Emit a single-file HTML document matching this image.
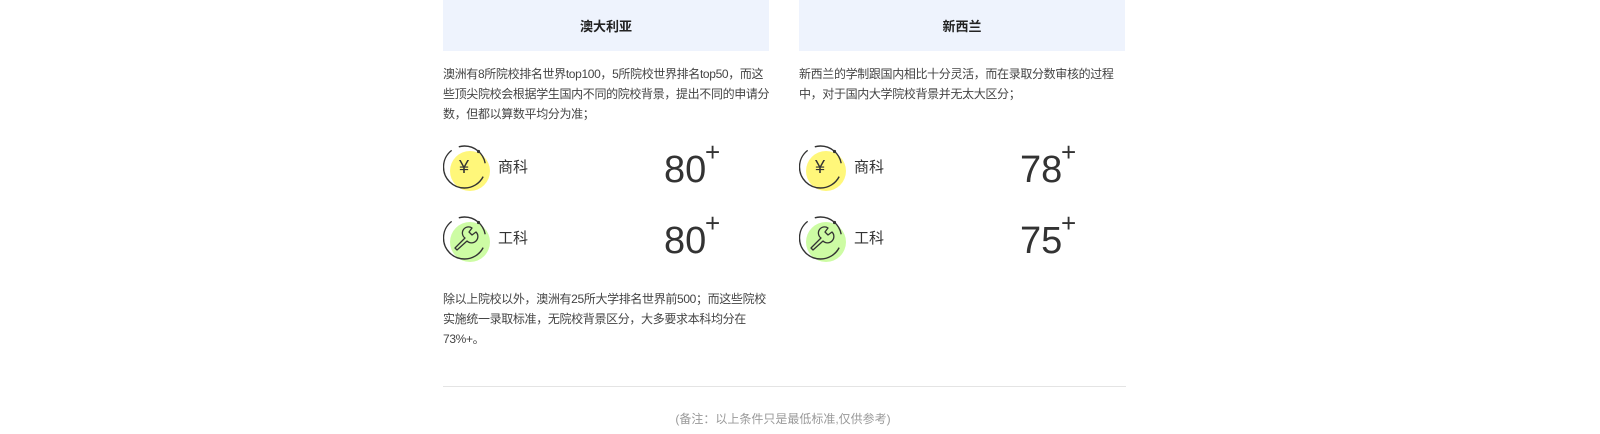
<!DOCTYPE html>
<html><head><meta charset="utf-8"><style>
*{margin:0;padding:0;box-sizing:border-box}
body{width:1600px;height:434px;background:#fff;font-family:"Liberation Sans","Noto Sans CJK SC",sans-serif;color:#333;position:relative;overflow:hidden}
.col{position:absolute;top:0;width:326px}
.hd{height:51px;background:#eef3fd;text-align:center;line-height:53px;font-size:13px;font-weight:bold;color:#222}
.p{font-size:12px;line-height:20px;color:#444;position:absolute;left:0;width:340px;white-space:nowrap;letter-spacing:-0.35px}
.row{position:absolute;left:0;width:326px;height:48px}
.row svg{position:absolute;left:0;top:0}
.row .lb{position:absolute;left:55px;top:11px;font-size:15px;color:#333}
.row .n{position:absolute;top:4px;font-size:38px;color:#333;font-family:"Liberation Sans",sans-serif}
.row .pl{position:absolute;top:-8px;font-size:26px;color:#333}
.hr{position:absolute;left:443px;top:386px;width:683px;height:1px;background:#e4e4e4}
.ft{position:absolute;left:0;width:1566px;top:410px;text-align:center;font-size:12px;color:#999}
</style></head><body>

<div class="col" style="left:443px">
 <div class="hd">澳大利亚</div>
 <div class="p" style="top:64px">澳洲有8所院校排名世界top100，5所院校世界排名top50，而这<br>些顶尖院校会根据学生国内不同的院校背景，提出不同的申请分<br>数，但都以算数平均分为准；</div>
 <div class="row" style="top:145px">
  <svg width="50" height="50"><circle cx="27" cy="26" r="20" fill="#fff77a"/><circle cx="21.5" cy="22" r="21" fill="none" stroke="#333" stroke-width="1.4" stroke-dasharray="75 8 35 14" stroke-dashoffset="-10"/><circle cx="35.5" cy="6.5" r="1.6" fill="#333"/><text x="21" y="28" font-size="18" text-anchor="middle" fill="#333" font-family="Liberation Sans">¥</text></svg>
  <span class="lb">商科</span><span class="n" style="left:221px">80</span><span class="pl" style="left:262px">+</span>
 </div>
 <div class="row" style="top:216px">
  <svg width="50" height="50"><circle cx="27" cy="26" r="20" fill="#cdfca4"/><circle cx="21.5" cy="22" r="21" fill="none" stroke="#333" stroke-width="1.4" stroke-dasharray="75 8 35 14" stroke-dashoffset="-10"/><circle cx="35.5" cy="6.5" r="1.6" fill="#333"/><path d="M12 32 L22 22 A6 6 0 0 1 29 12 L26 16 L29 19 L33 16 A6 6 0 0 1 24 25 L14 34 Z" fill="none" stroke="#333" stroke-width="1.3" stroke-linejoin="round"/></svg>
  <span class="lb">工科</span><span class="n" style="left:221px">80</span><span class="pl" style="left:262px">+</span>
 </div>
 <div class="p" style="top:289px">除以上院校以外，澳洲有25所大学排名世界前500；而这些院校<br>实施统一录取标准，无院校背景区分，大多要求本科均分在<br>73%+。</div>
</div>

<div class="col" style="left:799px">
 <div class="hd">新西兰</div>
 <div class="p" style="top:64px">新西兰的学制跟国内相比十分灵活，而在录取分数审核的过程<br>中，对于国内大学院校背景并无太大区分；</div>
 <div class="row" style="top:145px">
  <svg width="50" height="50"><circle cx="27" cy="26" r="20" fill="#fff77a"/><circle cx="21.5" cy="22" r="21" fill="none" stroke="#333" stroke-width="1.4" stroke-dasharray="75 8 35 14" stroke-dashoffset="-10"/><circle cx="35.5" cy="6.5" r="1.6" fill="#333"/><text x="21" y="28" font-size="18" text-anchor="middle" fill="#333" font-family="Liberation Sans">¥</text></svg>
  <span class="lb">商科</span><span class="n" style="left:221px">78</span><span class="pl" style="left:262px">+</span>
 </div>
 <div class="row" style="top:216px">
  <svg width="50" height="50"><circle cx="27" cy="26" r="20" fill="#cdfca4"/><circle cx="21.5" cy="22" r="21" fill="none" stroke="#333" stroke-width="1.4" stroke-dasharray="75 8 35 14" stroke-dashoffset="-10"/><circle cx="35.5" cy="6.5" r="1.6" fill="#333"/><path d="M12 32 L22 22 A6 6 0 0 1 29 12 L26 16 L29 19 L33 16 A6 6 0 0 1 24 25 L14 34 Z" fill="none" stroke="#333" stroke-width="1.3" stroke-linejoin="round"/></svg>
  <span class="lb">工科</span><span class="n" style="left:221px">75</span><span class="pl" style="left:262px">+</span>
 </div>
</div>

<div class="hr"></div>
<div class="ft">(备注：以上条件只是最低标准,仅供参考)</div>
</body></html>
